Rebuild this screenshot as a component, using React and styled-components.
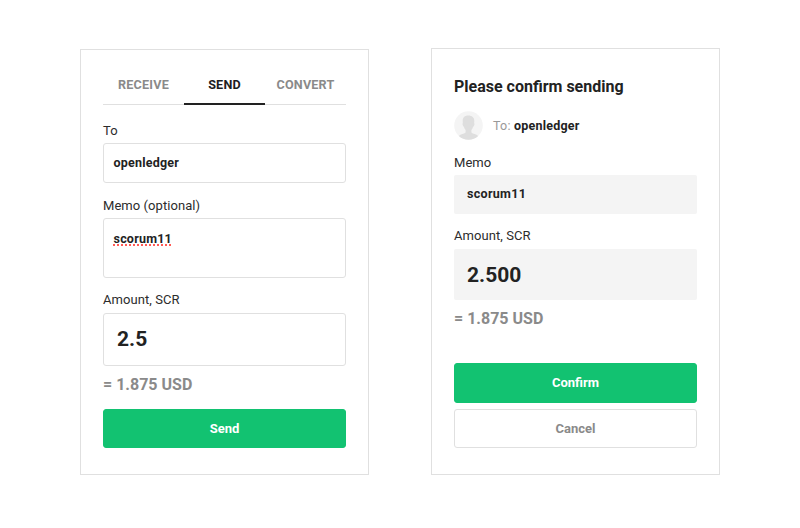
import React from 'react'
import styled, { createGlobalStyle } from 'styled-components'

const GlobalStyle = createGlobalStyle`
  * {
    box-sizing: border-box;
  }

  body {
    margin: 0;
    background: #fff;
    color: #222;
    font-family: Roboto, 'Liberation Sans', sans-serif;
  }
`

const App = () => (
  <Page>
    <GlobalStyle />
    <Panel $height={426} $top={49} $padding="15px 22px 0">
      <Tabs>
        <Tab>Receive</Tab>
        <Tab $active>Send</Tab>
        <Tab>Convert</Tab>
      </Tabs>
      <Label $gap={16} $line={20}>To</Label>
      <Field $height={40}>openledger</Field>
      <Label $gap={13} $line={20}>Memo (optional)</Label>
      <Field $height={60} $line={40}>
        <Misspelled>scorum11</Misspelled>
      </Field>
      <Label $gap={13}>Amount, SCR</Label>
      <Field $height={53} $line={51} $large>2.5</Field>
      <Rate>= 1.875 USD</Rate>
      <Button $primary $height={39} $gap={14}>Send</Button>
    </Panel>
    <Panel $height={427} $top={48} $padding="27px 22px 0">
      <Title>Please confirm sending</Title>
      <Recipient>
        <Avatar />
        <span>To: <b>openledger</b></span>
      </Recipient>
      <Label $gap={13} $line={20}>Memo</Label>
      <Value $height={39}>scorum11</Value>
      <Label $gap={13}>Amount, SCR</Label>
      <Value $height={51} $line={53} $large>2.500</Value>
      <Rate>= 1.875 USD</Rate>
      <Button $primary $height={40} $gap={34}>Confirm</Button>
      <Button $height={39} $gap={6}>Cancel</Button>
    </Panel>
  </Page>
)

const Avatar = () => (
  <svg width="29" height="29" viewBox="0 0 29 29">
    <circle cx="14.5" cy="14.5" r="14.3" fill="#f4f4f4" />
    <path
      d="M14.3 4.600c-3.700 0-5.600 2.100-5.600 5.300 0 1 .1 1.600.2 2.300-.6.200-.5 1.400.1 2.600.3.600.6.800.9.900.4 1.500 1 2.600 1.700 3.400v2.300c-1.500 1.500-4.900 1.600-6.800 3.500a14.300 14.300 0 0 0 19.400 0c-1.900-1.900-5.300-2-6.800-3.500v-2.300c.7-.8 1.300-1.900 1.700-3.400.3-.1.600-.3.900-.9.600-1.200.7-2.400.1-2.600.1-.7.2-1.300.2-2.300 0-3.200-2.300-5.300-6-5.300z"
      fill="#dedede"
    />
  </svg>
)

const Page = styled.div`
  display: flex;
  align-items: flex-start;
  gap: 62px;
  height: 528px;
  padding-left: 80px;
`

const Panel = styled.section`
  display: flex;
  flex-direction: column;
  width: 289px;
  height: ${({ $height }) => $height}px;
  margin-top: ${({ $top }) => $top}px;
  padding: ${({ $padding }) => $padding};
  border: 1px solid #e0e0e0;
`

const Tabs = styled.nav`
  display: grid;
  grid-template-columns: repeat(3, 81px);
  height: 40px;
`

const Tab = styled.a`
  height: 40px;
  border-bottom: ${({ $active }) => ($active ? '2px solid #222' : '1px solid #e0e0e0')};
  color: ${({ $active }) => ($active ? '#1d1d1f' : '#8a8a8a')};
  font-size: 12.6px;
  font-weight: 700;
  line-height: 39px;
  letter-spacing: 0.2px;
  text-align: center;
  text-transform: uppercase;
`

const Label = styled.label`
  height: 22px;
  margin-top: ${({ $gap }) => $gap}px;
  color: #2c2c2c;
  font-size: 13px;
  line-height: ${({ $line = 18 }) => $line}px;
  letter-spacing: 0.06px;
`

const Field = styled.div`
  height: ${({ $height }) => $height}px;
  padding: ${({ $large }) => ($large ? '0 13px' : '0 9.5px')};
  border: 1px solid #e0e0e0;
  border-radius: 3px;
  font-size: ${({ $large }) => ($large ? 21 : 12.5)}px;
  font-weight: 700;
  line-height: ${({ $line = 38 }) => $line}px;
  letter-spacing: ${({ $large }) => ($large ? 0 : 0.22)}px;
`

const Value = styled.div`
  height: ${({ $height }) => $height}px;
  padding: 0 13px;
  border-radius: 2px;
  background: #f4f4f4;
  font-size: ${({ $large }) => ($large ? 21 : 12.5)}px;
  font-weight: 700;
  line-height: ${({ $line = 38 }) => $line}px;
  letter-spacing: ${({ $large }) => ($large ? 0 : 0.3)}px;
`

const Misspelled = styled.span`
  text-decoration: underline dotted #ff5a55 2px;
  text-decoration-skip-ink: none;
  text-underline-offset: 1px;
`

const Rate = styled.p`
  height: 20px;
  margin: 9px 0 0;
  color: #8a8a8a;
  font-size: 16px;
  font-weight: 700;
  line-height: 20px;
`

const Button = styled.button`
  height: ${({ $height }) => $height}px;
  margin-top: ${({ $gap }) => $gap}px;
  padding: 0 0 1px;
  border: 1px solid ${({ $primary }) => ($primary ? '#12c271' : '#e0e0e0')};
  border-radius: 3px;
  background: ${({ $primary }) => ($primary ? '#12c271' : '#fff')};
  color: ${({ $primary }) => ($primary ? '#fff' : '#8a8a8a')};
  font: 700 13px Roboto, sans-serif;
`

const Title = styled.h2`
  margin: 0;
  font-size: 16px;
  line-height: 22px;
`

const Recipient = styled.div`
  display: flex;
  align-items: center;
  gap: 10px;
  height: 29px;
  margin-top: 13px;
  color: #999;
  font-size: 12.5px;
  letter-spacing: 0.22px;

  b {
    color: #222;
  }
`

export default App
